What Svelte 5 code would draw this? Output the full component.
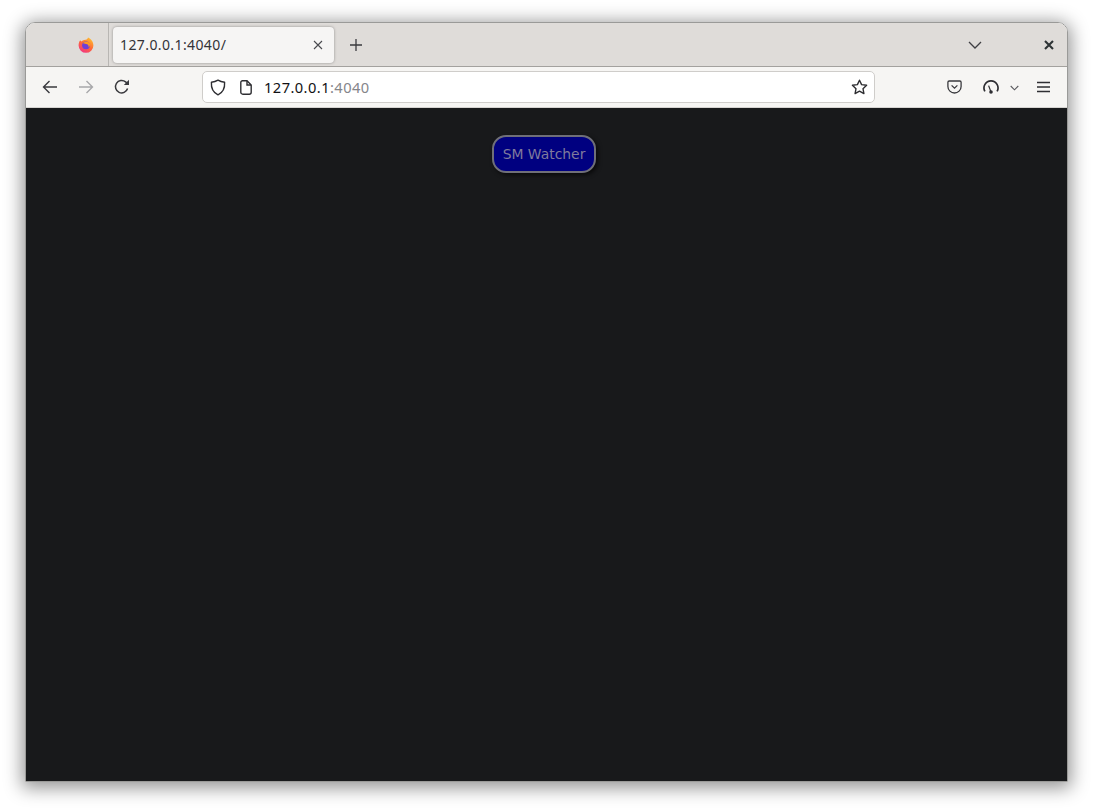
<script>
  const tabTitle = '127.0.0.1:4040/';
</script>

<div class="page">
  <div class="window">
    <header class="tabbar">
      <div class="pinned">
        <svg class="fx" width="16" height="16" viewBox="0 0 16 16">
          <defs>
            <linearGradient id="fxa" x1="0.8" y1="0" x2="0.2" y2="1">
              <stop offset="0" stop-color="#ffc32e" />
              <stop offset="0.5" stop-color="#ff6a36" />
              <stop offset="1" stop-color="#f0308c" />
            </linearGradient>
          </defs>
          <path d="M10 0.4C12.8 1.6 15.4 4.4 15.4 8.4A7.4 7.4 0 0 1 0.6 8.4C0.6 6.4 1.2 4.4 2.2 3.2C2.6 3.9 3 4.3 3.6 4.6C4.6 3.2 6.4 2.5 7.8 2.7C8.8 2.4 9.8 1.6 10 0.4Z" fill="url(#fxa)" />
          <circle cx="8" cy="8.3" r="3.9" fill="#6f3fd8" />
          <path d="M4.4 6.4C6 4.4 9.6 4.2 11.2 5.6C12.6 7 12.2 9.4 10.6 10.4C11 8.4 9.8 6.9 8 6.9C6.6 6.9 5.4 6.2 4.4 6.4Z" fill="#ff9a1f" />
        </svg>
      </div>
      <div class="tab">
        <span class="tab-title">{tabTitle}</span>
        <svg class="tab-close" width="10" height="10" viewBox="0 0 10 10">
          <path d="M1 1L9 9M9 1L1 9" stroke="#4a4a4f" stroke-width="1.1" fill="none" />
        </svg>
      </div>
      <svg class="newtab" width="14" height="14" viewBox="0 0 14 14">
        <path d="M7 1V13M1 7H13" stroke="#3a3a3e" stroke-width="1.3" fill="none" />
      </svg>
      <div class="spring"></div>
      <svg class="alltabs" width="14" height="8" viewBox="0 0 14 8">
        <path d="M1 1L7 7L13 1" stroke="#3f3f43" stroke-width="1.3" fill="none" />
      </svg>
      <svg class="winclose" width="10" height="10" viewBox="0 0 10 10">
        <path d="M1 1L9 9M9 1L1 9" stroke="#2e3436" stroke-width="2.1" fill="none" />
      </svg>
    </header>

    <nav class="toolbar">
      <svg class="back" width="16" height="14" viewBox="0 0 16 14">
        <path d="M15 7H1.5M7.5 1L1.5 7L7.5 13" stroke="#3a3a3e" stroke-width="1.4" fill="none" />
      </svg>
      <svg class="forward" width="16" height="14" viewBox="0 0 16 14">
        <path d="M1 7H14.5M8.5 1L14.5 7L8.5 13" stroke="#a8a8aa" stroke-width="1.4" fill="none" />
      </svg>
      <svg class="reload" width="16" height="16" viewBox="0 0 16 16">
        <path d="M13.6 9.6A6.2 6.2 0 1 1 11.6 2.9L14 5" stroke="#3a3a3e" stroke-width="1.5" fill="none" />
        <path d="M15 0.8V6H9.8Z" fill="#3a3a3e" />
      </svg>

      <div class="urlbar">
        <svg class="shield" width="16" height="17" viewBox="0 0 16 17">
          <path d="M8 1.2C10 2.4 12.4 3 14.6 3.2C15 9 13 13.4 8 15.8C3 13.4 1 9 1.4 3.2C3.6 3 6 2.4 8 1.2Z" stroke="#2e2e32" stroke-width="1.4" fill="none" stroke-linejoin="round" />
        </svg>
        <svg class="doc" width="12" height="15" viewBox="0 0 12 15">
          <path d="M2.5 0.8H7L11.2 5V12.2A2 2 0 0 1 9.2 14.2H2.8A2 2 0 0 1 0.8 12.2V2.5A1.7 1.7 0 0 1 2.5 0.8Z" stroke="#2e2e32" stroke-width="1.4" fill="none" />
          <path d="M7 1V5H11" stroke="#2e2e32" stroke-width="1.4" fill="none" />
        </svg>
        <span class="url"><span class="host">127.0.0.1</span><span class="port">:4040</span></span>
        <div class="spring"></div>
        <svg class="star" width="17" height="16" viewBox="0 0 17 16">
          <path d="M8.5 1.2L10.6 5.6L15.6 6.3L12 9.7L12.9 14.6L8.5 12.2L4.1 14.6L5 9.7L1.4 6.3L6.4 5.6Z" stroke="#2e2e32" stroke-width="1.4" fill="none" stroke-linejoin="round" />
        </svg>
      </div>

      <div class="spring"></div>

      <svg class="pocket" width="15" height="14" viewBox="0 0 15 14">
        <path d="M2.2 1H12.8A1.3 1.3 0 0 1 14.1 2.3V6.4C14.1 10.2 11 13 7.5 13C4 13 0.9 10.2 0.9 6.4V2.3A1.3 1.3 0 0 1 2.2 1Z" stroke="#3a3a3e" stroke-width="1.3" fill="none" />
        <path d="M4.6 5.4L7.5 8.2L10.4 5.4" stroke="#3a3a3e" stroke-width="1.3" fill="none" />
      </svg>
      <svg class="gauge" width="16" height="15" viewBox="0 0 16 15">
        <path d="M1.9 11.4A7 7 0 1 1 14.1 11.4" stroke="#2e2e32" stroke-width="1.7" fill="none" />
        <path d="M5.6 5.6L8 12" stroke="#2e2e32" stroke-width="1.2" fill="none" />
        <circle cx="8" cy="12" r="1.8" fill="#2e2e32" />
      </svg>
      <svg class="gauge-menu" width="9" height="6" viewBox="0 0 9 6">
        <path d="M0.7 1L4.5 4.8L8.3 1" stroke="#5a5a5e" stroke-width="1.1" fill="none" />
      </svg>
      <svg class="hamburger" width="13" height="12" viewBox="0 0 13 12">
        <path d="M0 1.5H13M0 6H13M0 10.5H13" stroke="#2e2e32" stroke-width="1.3" fill="none" />
      </svg>
    </nav>

    <main class="content">
      <button class="watcher">SM Watcher</button>
    </main>
  </div>
</div>

<style>
  :global(body) {
    margin: 0;
    background: #fff;
  }

  .page {
    height: 810px;
    padding: 22px 25px 0 25px;
    box-sizing: border-box;
    overflow: hidden;
  }

  .window {
    width: 1043px;
    height: 760px;
    box-sizing: border-box;
    border: 1px solid #9a9a98;
    border-radius: 10px 10px 0 0;
    overflow: hidden;
    display: flex;
    flex-direction: column;
    box-shadow: 0 3px 18px 3px rgba(0, 0, 0, 0.42);
    font-family: "Noto Sans", sans-serif;
  }

  .tabbar {
    height: 44px;
    flex: none;
    box-sizing: border-box;
    background: #dfdcd9;
    border-bottom: 1px solid #a3a19e;
    display: flex;
    align-items: center;
  }

  .pinned {
    width: 83px;
    height: 43px;
    flex: none;
    box-sizing: border-box;
    border-right: 1px solid #b8b6b3;
    display: flex;
    align-items: center;
    padding-left: 52px;
  }

  .fx {
    flex: none;
  }

  .tab {
    width: 221px;
    height: 36px;
    margin-left: 4px;
    flex: none;
    box-sizing: border-box;
    background: #f6f5f4;
    border-radius: 4px;
    box-shadow: 0 0 3px rgba(0, 0, 0, 0.35);
    display: flex;
    align-items: center;
    padding: 0 11px 0 7px;
    justify-content: space-between;
  }

  .tab-title {
    font-size: 14px;
    letter-spacing: 0.4px;
    color: #333338;
    white-space: nowrap;
  }

  .newtab {
    margin-left: 15px;
    flex: none;
  }

  .spring {
    flex: 1;
  }

  .alltabs {
    flex: none;
    margin-right: 62px;
  }

  .winclose {
    flex: none;
    margin-right: 13px;
  }

  .toolbar {
    height: 41px;
    flex: none;
    box-sizing: border-box;
    background: #f6f5f3;
    border-bottom: 1px solid #d6d4d1;
    display: flex;
    align-items: center;
    padding-left: 16px;
  }

  .back,
  .forward,
  .reload {
    flex: none;
  }

  .forward {
    margin-left: 20px;
  }

  .reload {
    margin-left: 20px;
  }

  .urlbar {
    width: 673px;
    height: 32px;
    margin-left: 72px;
    flex: none;
    box-sizing: border-box;
    background: #fff;
    border: 1px solid #cfcdca;
    border-radius: 5px;
    display: flex;
    align-items: center;
    padding: 0 6px 0 7px;
  }

  .shield {
    flex: none;
  }

  .doc {
    flex: none;
    margin-left: 14px;
  }

  .url {
    margin-left: 12px;
    font-size: 14.67px;
    letter-spacing: 0.43px;
    white-space: nowrap;
  }

  .host {
    color: #111114;
  }

  .port {
    color: #85858a;
  }

  .star {
    flex: none;
  }

  .pocket {
    flex: none;
    margin-right: 21px;
  }

  .gauge {
    flex: none;
    margin-right: 11px;
  }

  .gauge-menu {
    flex: none;
    margin-right: 18px;
    position: relative;
    top: 1px;
  }

  .hamburger {
    flex: none;
    margin-right: 17px;
  }

  .content {
    flex: 1;
    background: #18191b;
    padding: 27px 0 0 466px;
  }

  .watcher {
    display: block;
    width: 104px;
    height: 38px;
    box-sizing: border-box;
    padding: 0;
    background: #000080;
    color: #7f7a9c;
    border: 2px solid #6f6f78;
    border-radius: 14px;
    box-shadow: 2px 2px 4px rgba(0, 0, 0, 0.65);
    font-family: "DejaVu Sans", sans-serif;
    font-size: 13.9px;
    white-space: nowrap;
  }
</style>
